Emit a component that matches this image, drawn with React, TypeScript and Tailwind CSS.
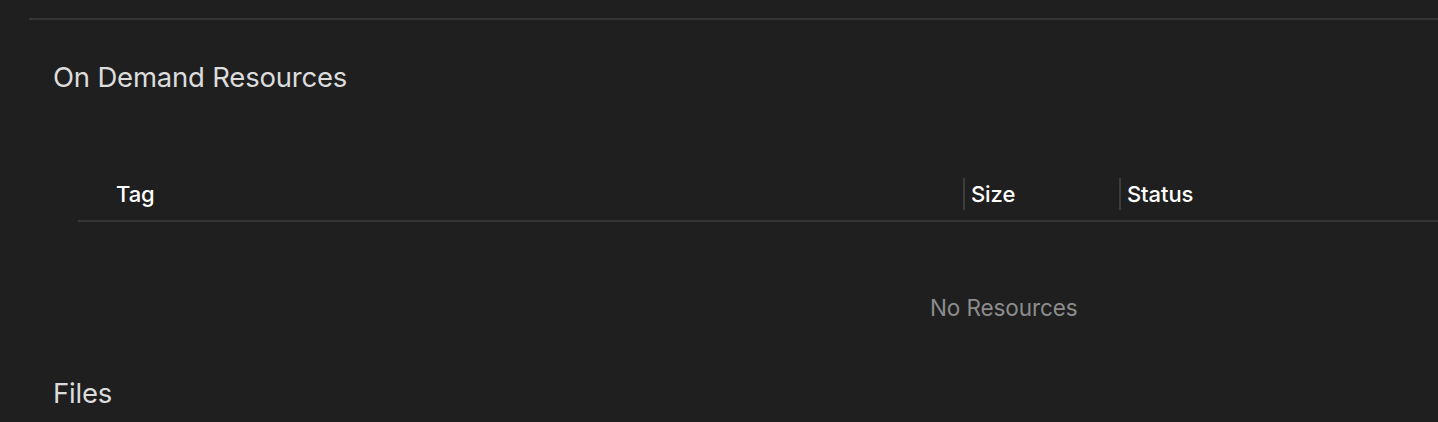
export default function App() {
    return (
        <div
            className="w-[1438px] h-[422px] overflow-hidden bg-[#1f1f1f] text-[#dedede]"
            style={{ fontFamily: 'Inter, "Liberation Sans", sans-serif' }}
        >
            {/* top divider */}
            <div className="pt-[18px] pl-[29px]">
                <div className="h-[2px] bg-[#363636]" />
            </div>

            {/* On Demand Resources */}
            <div className="pl-[53px] pt-[39px]">
                <h2 className="text-[27.5px] leading-[36px] tracking-[-0.2px] text-[#dcdcdc]">On Demand Resources</h2>
            </div>

            {/* table */}
            <div className="pl-[78px] pt-[81px]">
                <div className="flex items-center h-[36px] text-[22px] font-medium text-white tracking-[-0.1px]">
                    <div className="w-[885px] pl-[38px]">Tag</div>
                    <div className="w-[2px] h-[32px] bg-[#3c3c3c]" />
                    <div className="w-[154px] pl-[6px]">Size</div>
                    <div className="w-[2px] h-[32px] bg-[#3c3c3c]" />
                    <div className="flex-1 pl-[6px]">Status</div>
                </div>
                <div className="mt-[8px] h-[2px] bg-[#363636]" />
                <div className="pl-[852px] pt-[71px]">
                    <span className="text-[22.5px] leading-[30px] text-[#8c8c8c] tracking-[-0.1px]">No Resources</span>
                </div>
            </div>

            {/* Files */}
            <div className="pl-[53px] pt-[52px]">
                <h2 className="text-[27.5px] leading-[36px] tracking-[-0.2px] text-[#dcdcdc]">Files</h2>
            </div>
        </div>
    );
}
